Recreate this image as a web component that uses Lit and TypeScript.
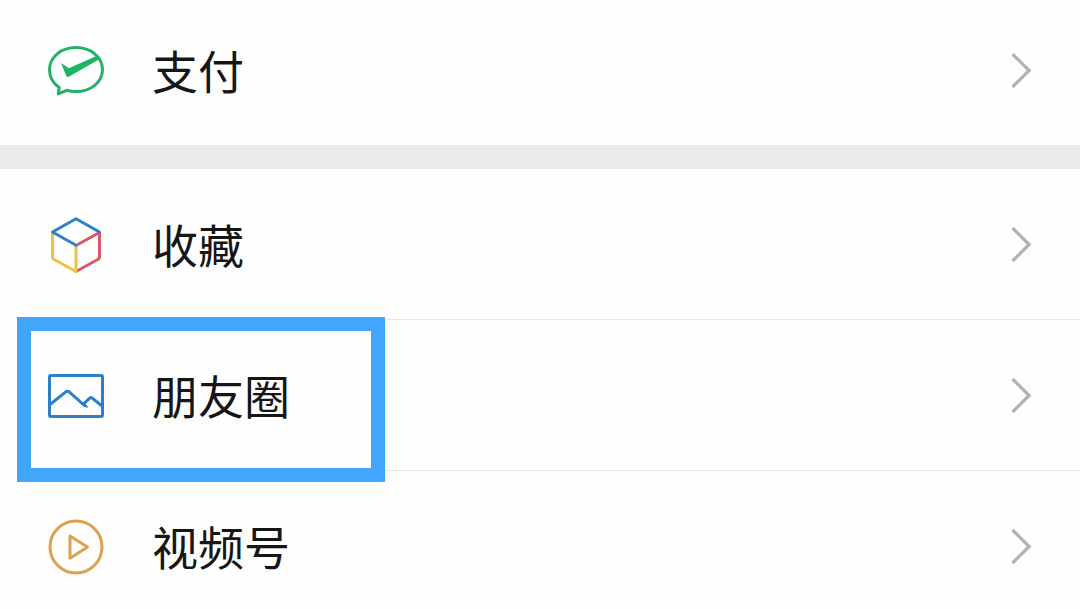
import { LitElement, html, css, svg } from "lit";
import { customElement } from "lit/decorators.js";

const payIcon = svg`
  <path d="M11.200 45.600C5.200 41.400 1.500 35 1.500 27.800C1.500 14.800 13.300 5.600 28 5.600S54.500 14.800 54.500 27.600S42.700 49.600 28 49.600C24.600 49.600 21.600 49.200 18.700 48.300L10.300 51.800Z"
    fill="none" stroke="#22b266" stroke-width="3" stroke-linejoin="round"/>
  <path d="M13.200 21.600Q12.800 21.200 13.600 21.400L20.200 25.800Q21 26.200 22 25.800L50 13.200L52.500 16.400L20.800 34.800Q19.200 35.600 18.300 34Z" fill="#1fb565"/>`;

const favoritesIcon = svg`
  <g fill="none" stroke-width="3" stroke-linejoin="round" stroke-linecap="round">
    <path d="M28 28.500L51.500 15.500V40Q51.500 41.500 50.200 42.300L28 54.500" stroke="#d95767"/>
    <path d="M4.500 16V40Q4.500 41.500 5.800 42.300L28 54.500V29" stroke="#efc048"/>
    <path d="M51 14.800L28 1.800L4.500 15L28 28.200" stroke="#2f80c4"/>
  </g>`;

const momentsIcon = svg`
  <g fill="none" stroke="#2a7fca" stroke-width="3" stroke-linejoin="round">
    <rect x="1.500" y="7.500" width="53" height="41" rx="1.500"/>
    <path d="M2 36.500L17.800 23.800Q19.500 22.600 21.200 23.800L37 38"/>
    <path d="M35 36.500L41.400 30.300Q43 28.900 44.600 30.300L54 38"/>
  </g>
  <path d="M33 36L36.500 34.500L40.500 39.500H38Q35.500 39 33 36Z" fill="#2a7fca"/>`;

const channelsIcon = svg`
  <g fill="none" stroke="#e0a054" stroke-width="3" stroke-linejoin="round">
    <circle cx="28" cy="28" r="26"/>
    <path d="M22 17L39.500 28L22 39.200Z"/>
  </g>`;

const groups = [
  [{ label: "支付", icon: payIcon, marked: false }],
  [
    { label: "收藏", icon: favoritesIcon, marked: false },
    { label: "朋友圈", icon: momentsIcon, marked: true },
    { label: "视频号", icon: channelsIcon, marked: false },
  ],
];

@customElement("app-root")
export class AppRoot extends LitElement {
  static styles = css`
    :host {
      display: block;
      height: 100vh;
      overflow: hidden;
      background: #fefefe;
      color: #161616;
      font-family: "Noto Sans CJK SC", "Noto Sans", sans-serif;
    }
    .menu {
      display: flex;
      flex-direction: column;
      gap: 24px;
      background: #ebebeb;
    }
    .group {
      list-style: none;
      margin: 0;
      padding: 0;
      background: #fefefe;
    }
    .item {
      position: relative;
    }
    .row {
      display: flex;
      gap: 48px;
      padding-left: 48px;
      color: inherit;
      text-decoration: none;
    }
    .icon {
      flex: none;
      width: 56px;
      height: 56px;
      padding: 48px 0 46px;
    }
    .body {
      flex: 1;
      display: flex;
      align-items: center;
      justify-content: space-between;
      padding: 47px 48px 47px 0;
      border-bottom: 1px solid #e4e8ea;
    }
    .group:first-child .icon,
    .group:first-child .body {
      padding-top: 42px;
    }
    .item:last-child .body {
      border-bottom: 0;
    }
    .label {
      padding-bottom: 2px;
      font-size: 46px;
      line-height: 54px;
    }
    .chevron {
      flex: none;
      width: 22px;
      height: 38px;
    }
    .marker {
      position: absolute;
      top: -3px;
      left: 17px;
      width: 368px;
      height: 165px;
      box-sizing: border-box;
      border: 14px solid #42a5fe;
      pointer-events: none;
      z-index: 1;
    }
  `;

  render() {
    return html`
      <nav class="menu">
        ${groups.map(
          (group) => html`
            <ul class="group">
              ${group.map(
                (item) => html`
                  <li class="item">
                    <a class="row" href="#">
                      <svg class="icon" viewBox="0 0 56 56" aria-hidden="true">${item.icon}</svg>
                      <span class="body">
                        <span class="label">${item.label}</span>
                        <svg class="chevron" viewBox="0 0 22 38" aria-hidden="true">
                          <path d="M2.500 3L19.200 19.500L2.500 36" fill="none" stroke="#b2b2b2" stroke-width="3.200" />
                        </svg>
                      </span>
                    </a>
                    ${item.marked ? html`<span class="marker"></span>` : null}
                  </li>
                `
              )}
            </ul>
          `
        )}
      </nav>
    `;
  }
}
